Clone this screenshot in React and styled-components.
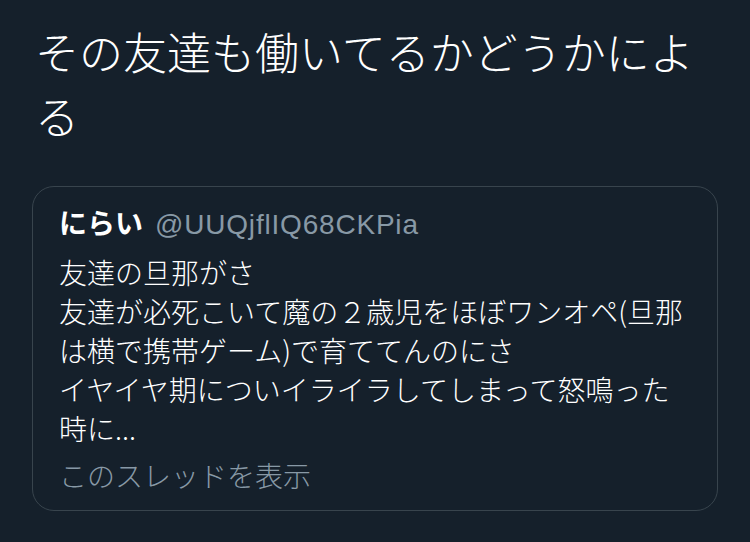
import styled, { createGlobalStyle } from "styled-components";

const GlobalStyle = createGlobalStyle`
  html, body {
    margin: 0;
    padding: 0;
    background: #15202b;
  }
  body {
    font-family: "Noto Sans CJK JP", "Noto Sans", sans-serif;
    color: #ffffff;
  }
`;

const Page = styled.main`
  width: 750px;
  height: 542px;
  background: #15202b;
  overflow: hidden;
  display: flex;
  flex-direction: column;
`;

const Headline = styled.p`
  margin: 0;
  padding: 19px 32px 0 35px;
  font-size: 44px;
  font-weight: 300;
  line-height: 64px;
  color: #ffffff;
`;

const QuoteCard = styled.article`
  margin: 39px 32px 0;
  padding: 16px 26px 15px;
  border: 1px solid #38444d;
  border-radius: 22px;
  display: flex;
  flex-direction: column;
`;

const Author = styled.div`
  display: flex;
  align-items: baseline;
  gap: 12px;
  line-height: 39px;
  white-space: nowrap;
`;

const Name = styled.span`
  font-size: 28px;
  font-weight: 700;
  color: #ffffff;
`;

const Handle = styled.span`
  font-family: "Liberation Sans", "Noto Sans", sans-serif;
  font-size: 28px;
  letter-spacing: 0.8px;
  color: #8899a6;
`;

const Body = styled.p`
  margin: 9px 0 0;
  font-size: 28px;
  font-weight: 300;
  line-height: 39px;
  color: #ffffff;
`;

const ThreadLink = styled.span`
  margin-top: 8px;
  font-size: 28px;
  font-weight: 300;
  line-height: 39px;
  color: #8899a6;
`;

export default function App() {
  return (
    <>
      <GlobalStyle />
      <Page>
        <Headline>その友達も働いてるかどうかによる</Headline>
        <QuoteCard>
          <Author>
            <Name>にらい</Name>
            <Handle>@UUQjflIQ68CKPia</Handle>
          </Author>
          <Body>
            友達の旦那がさ
            <br />
            友達が必死こいて魔の２歳児をほぼワンオペ(旦那は横で携帯ゲーム)で育ててんのにさ
            <br />
            イヤイヤ期についイライラしてしまって怒鳴った時に...
          </Body>
          <ThreadLink>このスレッドを表示</ThreadLink>
        </QuoteCard>
      </Page>
    </>
  );
}
